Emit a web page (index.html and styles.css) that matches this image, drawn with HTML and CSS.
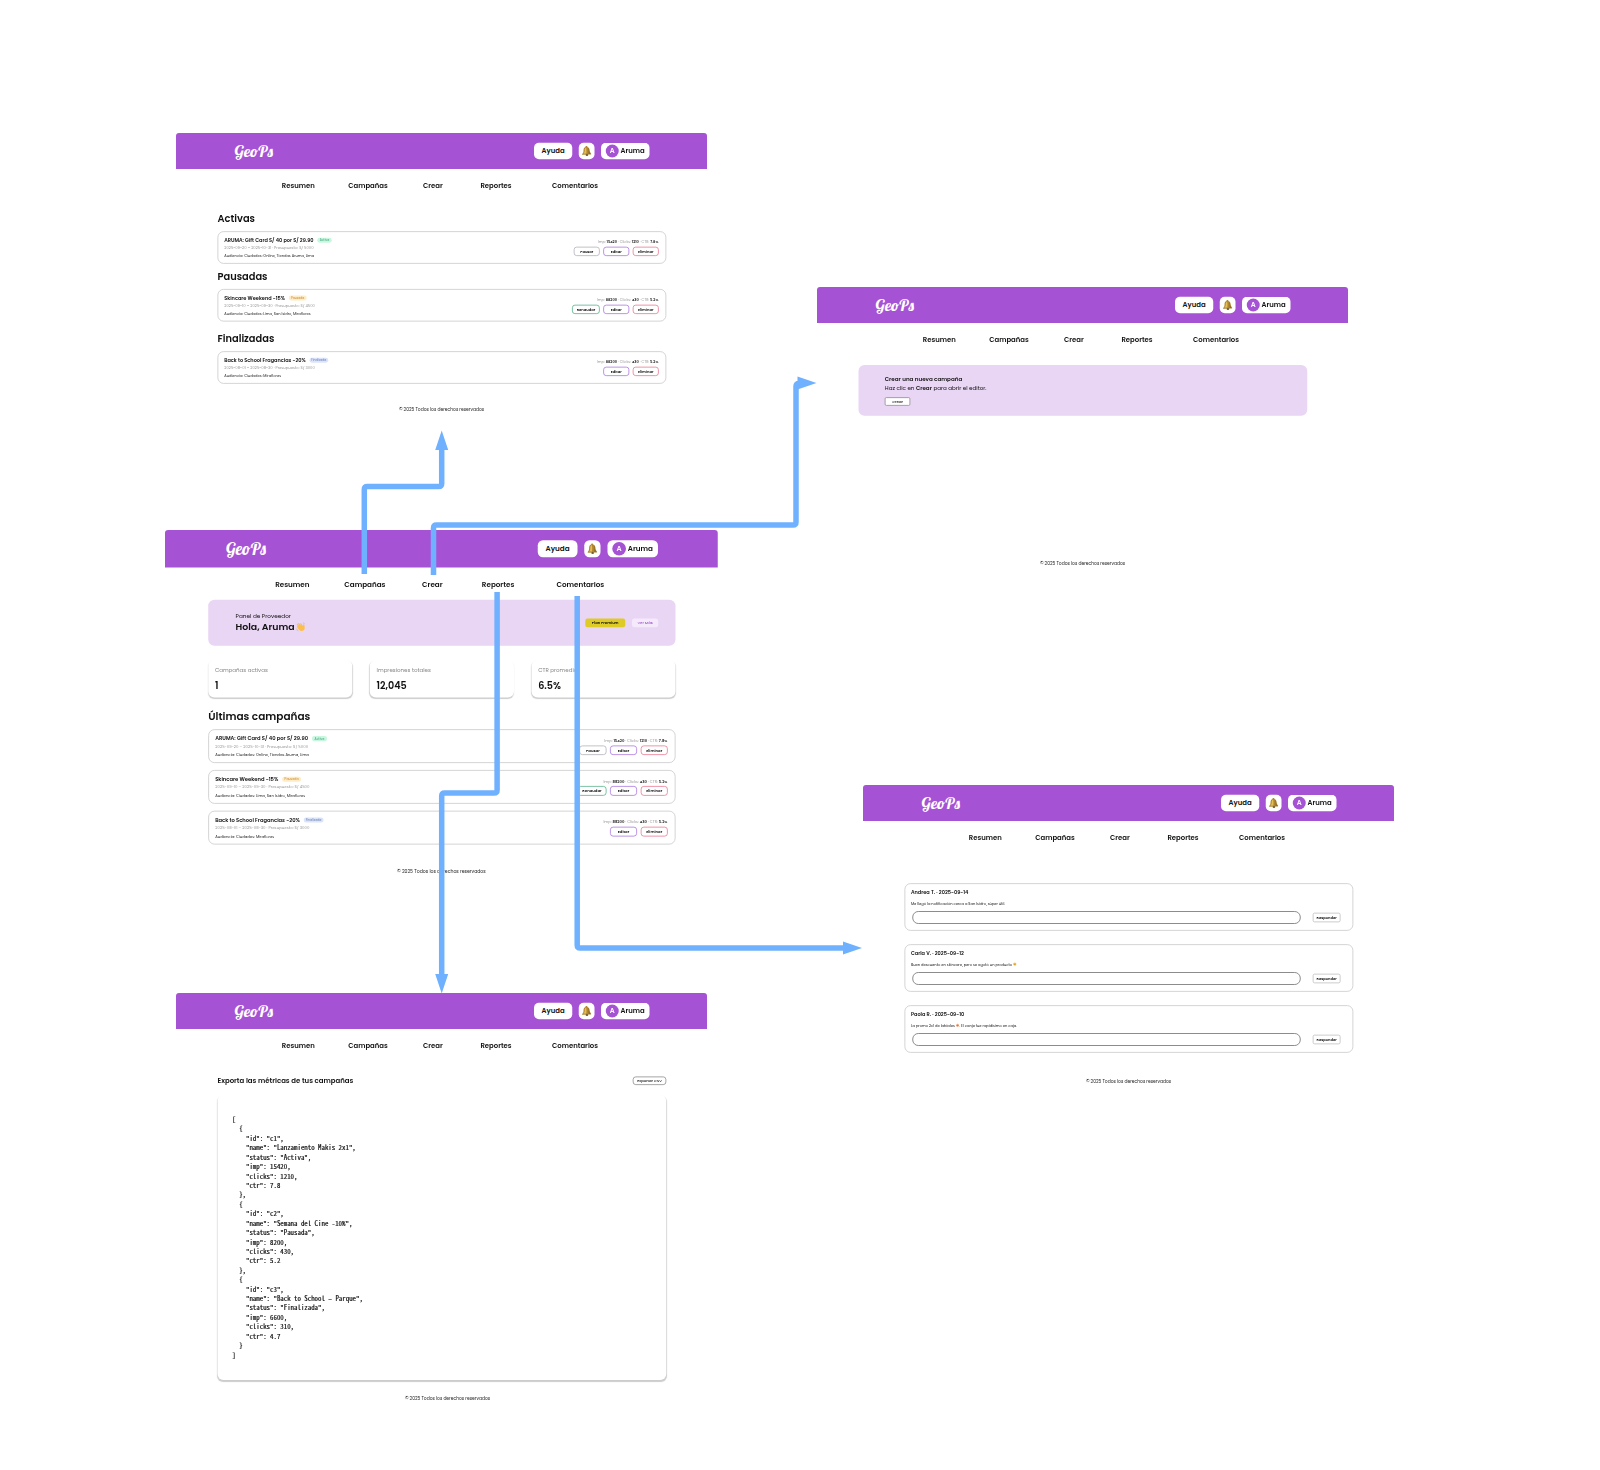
FILE: index.html
```html
<!DOCTYPE html>
<html lang="es">
<head>
<meta charset="utf-8">
<title>GeoPs – flujo de navegación</title>
<link rel="stylesheet" href="styles.css">
</head>
<body>
<svg class="defs" width="0" height="0" aria-hidden="true">
  <symbol id="bell" viewBox="2 1 16 18.500">
    <path d="M9.600 1.200c1.300 0 1.800.8 1.700 1.900 2.700.9 3.800 3 4 6 .2 2.600.8 4.200 2.700 5.700.7.600.5 1.600-.5 1.700L3 17c-1.200 0-1.500-1.100-.7-1.800C4 13.800 4.500 12 4.500 9.400c0-3.300 1-5.500 3.500-6.300 0-1.100.500-1.900 1.600-1.900z" fill="#b08630"/>
    <path d="M9 4c-2 1-2.600 3-2.500 5.500.1 2.500-.7 4.200-2.200 5.500l5.200-.2C9.800 11 10 7 9 4z" fill="#e3bd55"/>
    <path d="M13 5c1.300 1.500 1.200 4 1.500 6 .3 1.700 1 3 2 4l-3 .2c.4-3.500.3-7-.5-10.200z" fill="#7d6326"/>
    <ellipse cx="10.500" cy="17.400" rx="2.300" ry="1.700" fill="#6f5a2a"/>
  </symbol>
  <symbol id="wave" viewBox="0 0 20 20">
    <path d="M3 5.500C2 4 3.800 2.900 4.900 4.300L8 8 5.500 4C4.700 2.500 6.500 1.300 7.600 2.900L11 7.500 9.400 4.200c-.7-1.600 1.300-2.500 2.200-1L14.500 8l.6-2.500c.5-1.700 2.600-1.200 2.500.6-.1 2 .7 4 .6 6.500-.2 4-5 6.400-8.400 4.600C7 15.700 4.600 12.500 3 10c-.8-1.500.7-2.500 1.800-1.300z" fill="#fbbf4b"/>
    <path d="M2 13c.3 2.300 1.500 3.800 3.500 4.500M15 1.500c1.500.3 2.500 1.200 3 2.500" fill="none" stroke="#e0a95a" stroke-width="1"/>
  </symbol>
</svg>

<main class="canvas">

  <section class="board campaigns">
    <header class="top"><span class="logo">GeoPs</span><span class="pill help">Ayuda</span><span class="pill bell"><svg><use href="#bell"/></svg></span><span class="pill user"><i class="avatar">A</i>Aruma</span></header>
    <nav><a class="n1">Resumen</a><a class="n2">Campañas</a><a class="n3">Crear</a><a class="n4">Reportes</a><a class="n5">Comentarios</a></nav>
    <div class="content">
      <h2>Activas</h2>
      <article class="camp">
        <div class="info"><h3>ARUMA: Gift Card S/ 40 por S/ 29.90<span class="badge on">Activa</span></h3><p class="date">2025-09-20 – 2025-10-31 · Presupuesto: S/ 5000</p><p class="aud">Audiencia: Ciudades: Online, Tiendas Aruma, Lima</p></div>
        <div class="side"><p>Imp: <b>15420</b> · Clicks: <b>1210</b> · CTR: <b>7.8%</b></p><div class="btns"><span class="btn">Pausar</span><span class="btn edit">Editar</span><span class="btn del">Eliminar</span></div></div>
      </article>
      <h2 class="h-paused">Pausadas</h2>
      <article class="camp">
        <div class="info"><h3>Skincare Weekend -15%<span class="badge wait">Pausada</span></h3><p class="date">2025-09-10 – 2025-09-30 · Presupuesto: S/ 4500</p><p class="aud">Audiencia: Ciudades: Lima, San Isidro, Miraflores</p></div>
        <div class="side"><p>Imp: <b>88200</b> · Clicks: <b>430</b> · CTR: <b>5.2%</b></p><div class="btns"><span class="btn resume">Renaudar</span><span class="btn edit">Editar</span><span class="btn del">Eliminar</span></div></div>
      </article>
      <h2 class="h-done">Finalizadas</h2>
      <article class="camp">
        <div class="info"><h3>Back to School Fragancias -20%<span class="badge end">Finalizada</span></h3><p class="date">2025-08-01 – 2025-08-30 · Presupuesto: S/ 3000</p><p class="aud">Audiencia: Ciudades: Miraflores</p></div>
        <div class="side"><p>Imp: <b>88200</b> · Clicks: <b>430</b> · CTR: <b>5.2%</b></p><div class="btns"><span class="btn edit">Editar</span><span class="btn del">Eliminar</span></div></div>
      </article>
    </div>
    <footer>© 2025 Todos los derechos reservados</footer>
  </section>

  <section class="board create">
    <header class="top"><span class="logo">GeoPs</span><span class="pill help">Ayuda</span><span class="pill bell"><svg><use href="#bell"/></svg></span><span class="pill user"><i class="avatar">A</i>Aruma</span></header>
    <nav><a class="n1">Resumen</a><a class="n2">Campañas</a><a class="n3">Crear</a><a class="n4">Reportes</a><a class="n5">Comentarios</a></nav>
    <div class="content">
      <div class="panel new"><h4>Crear una nueva campaña</h4><p>Haz clic en <b>Crear</b> para abrir el editor.</p><span class="mini">Crear</span></div>
    </div>
    <footer>© 2025 Todos los derechos reservados</footer>
  </section>

  <section class="board summary">
    <header class="top"><span class="logo">GeoPs</span><span class="pill help">Ayuda</span><span class="pill bell"><svg><use href="#bell"/></svg></span><span class="pill user"><i class="avatar">A</i>Aruma</span></header>
    <nav><a class="n1">Resumen</a><a class="n2">Campañas</a><a class="n3">Crear</a><a class="n4">Reportes</a><a class="n5">Comentarios</a></nav>
    <div class="content">
      <div class="panel hello">
        <div class="greet"><p>Panel de Proveedor</p><strong>Hola, Aruma<svg><use href="#wave"/></svg></strong></div>
        <span class="plan">Plan Premium</span><span class="more">Ver Más</span>
      </div>
      <div class="stats">
        <div class="stat"><p>Campañas activas</p><strong>1</strong></div>
        <div class="stat"><p>Impresiones totales</p><strong>12,045</strong></div>
        <div class="stat"><p>CTR promedio</p><strong>6.5%</strong></div>
      </div>
      <h2>Últimas campañas</h2>
      <div class="list">
      <article class="camp">
        <div class="info"><h3>ARUMA: Gift Card S/ 40 por S/ 29.90<span class="badge on">Activa</span></h3><p class="date">2025-09-20 – 2025-10-31 · Presupuesto: S/ 5000</p><p class="aud">Audiencia: Ciudades: Online, Tiendas Aruma, Lima</p></div>
        <div class="side"><p>Imp: <b>15420</b> · Clicks: <b>1210</b> · CTR: <b>7.8%</b></p><div class="btns"><span class="btn">Pausar</span><span class="btn edit">Editar</span><span class="btn del">Eliminar</span></div></div>
      </article>
      <article class="camp">
        <div class="info"><h3>Skincare Weekend -15%<span class="badge wait">Pausada</span></h3><p class="date">2025-09-10 – 2025-09-30 · Presupuesto: S/ 4500</p><p class="aud">Audiencia: Ciudades: Lima, San Isidro, Miraflores</p></div>
        <div class="side"><p>Imp: <b>88200</b> · Clicks: <b>430</b> · CTR: <b>5.2%</b></p><div class="btns"><span class="btn resume">Renaudar</span><span class="btn edit">Editar</span><span class="btn del">Eliminar</span></div></div>
      </article>
      <article class="camp">
        <div class="info"><h3>Back to School Fragancias -20%<span class="badge end">Finalizada</span></h3><p class="date">2025-08-01 – 2025-08-30 · Presupuesto: S/ 3000</p><p class="aud">Audiencia: Ciudades: Miraflores</p></div>
        <div class="side"><p>Imp: <b>88200</b> · Clicks: <b>430</b> · CTR: <b>5.2%</b></p><div class="btns"><span class="btn edit">Editar</span><span class="btn del">Eliminar</span></div></div>
      </article>
      </div>
    </div>
    <footer>© 2025 Todos los derechos reservados</footer>
  </section>

  <section class="board comments">
    <header class="top"><span class="logo">GeoPs</span><span class="pill help">Ayuda</span><span class="pill bell"><svg><use href="#bell"/></svg></span><span class="pill user"><i class="avatar">A</i>Aruma</span></header>
    <nav><a class="n1">Resumen</a><a class="n2">Campañas</a><a class="n3">Crear</a><a class="n4">Reportes</a><a class="n5">Comentarios</a></nav>
    <div class="content">
      <article class="comment"><h4>Andrea T. · 2025-09-14</h4><p>Me llegó la notificación cerca a San Isidro, súper útil.</p><div class="reply"><span class="field"></span><span class="answer">Responder</span></div></article>
      <article class="comment"><h4>Carla V. · 2025-09-12</h4><p>Buen descuento en skincare, pero se agotó un producto <svg viewBox="0 0 10 10"><circle cx="5" cy="5" r="4.500" fill="#fbb93c"/><path d="M3.200 7.300q1.800-1.600 3.600 0" stroke="#8a5a12" fill="none"/></svg></p><div class="reply"><span class="field"></span><span class="answer">Responder</span></div></article>
      <article class="comment"><h4>Paola R. · 2025-09-10</h4><p>La promo 2x1 de labiales <svg viewBox="0 0 10 10"><path d="M5 0c.4 2 3.600 3.300 3.600 6.300C8.600 8.600 7 10 5 10S1.400 8.600 1.400 6.300C1.400 4.700 2.300 4 2.700 3c.8.500 1 1 1.100 1.500C4.700 3.500 5.300 2 5 0z" fill="#f4702b"/></svg>. El canje fue rapidísimo en caja.</p><div class="reply"><span class="field"></span><span class="answer">Responder</span></div></article>
    </div>
    <footer>© 2025 Todos los derechos reservados</footer>
  </section>

  <section class="board reports">
    <header class="top"><span class="logo">GeoPs</span><span class="pill help">Ayuda</span><span class="pill bell"><svg><use href="#bell"/></svg></span><span class="pill user"><i class="avatar">A</i>Aruma</span></header>
    <nav><a class="n1">Resumen</a><a class="n2">Campañas</a><a class="n3">Crear</a><a class="n4">Reportes</a><a class="n5">Comentarios</a></nav>
    <div class="content">
      <div class="export"><h4>Exporta las métricas de tus campañas</h4><span class="csv">Exportar CSV</span></div>
      <div class="code"><pre>[
  {
    "id": "c1",
    "name": "Lanzamiento Makis 2x1",
    "status": "Activa",
    "imp": 15420,
    "clicks": 1210,
    "ctr": 7.8
  },
  {
    "id": "c2",
    "name": "Semana del Cine -10%",
    "status": "Pausada",
    "imp": 8200,
    "clicks": 430,
    "ctr": 5.2
  },
  {
    "id": "c3",
    "name": "Back to School – Parque",
    "status": "Finalizada",
    "imp": 6600,
    "clicks": 310,
    "ctr": 4.7
  }
]</pre></div>
    </div>
    <footer>© 2025 Todos los derechos reservados</footer>
  </section>

  <svg class="links" viewBox="0 0 1600 1470">
    <g fill="none" stroke="#6fb1ff" stroke-width="5.500" stroke-linejoin="round">
      <path d="M364.300 574V489.500q0-3 3-3H438.700q3 0 3-3V449"/>
      <path d="M433.500 575V528q0-3 3-3H793q3 0 3-3V386.500q0-3 3-3h1"/>
      <path d="M497.100 592V790q0 3-3 3H444.700q-3 0-3 3V976"/>
      <path d="M577.200 596V945q0 3 3 3H844"/>
    </g>
    <g fill="#6fb1ff">
      <path d="M441.700 430.500l6.500 19.500h-13z"/>
      <path d="M816.500 383l-19 6.500v-13z"/>
      <path d="M441.700 993.500l6.500-19.500h-13z"/>
      <path d="M862 948l-19 6.500v-13z"/>
    </g>
  </svg>
</main>
</body>
</html>
```
FILE: styles.css
```css
* { box-sizing: border-box; margin: 0; padding: 0; }
body { background: #fff; }
.defs { position: absolute; }
.canvas { position: relative; width: 1600px; height: 1470px; overflow: hidden; font-family: Poppins, Inter, "Open Sans", sans-serif; color: #111; }
.links { position: absolute; left: 0; top: 0; width: 1600px; height: 1470px; }

/* Boards are laid out at four times their size and scaled down on the canvas */
.board { position: absolute; width: 53.1em; font-size: 40px; display: flex; flex-direction: column; transform: scale(.25); transform-origin: 0 0; }
.campaigns { left: 176px; top: 132.700px; height: 29em; }
.create { left: 817.400px; top: 287px; height: 29em; }
.summary { left: 165.400px; top: 530px; height: 33.600em; font-size: 41.640px; }
.comments { left: 862.700px; top: 785px; height: 31em; }
.reports { left: 176px; top: 993.200px; height: 42em; }

.top { flex: none; height: 3.610em; display: flex; align-items: center; padding: 0 5.750em 0 5.850em; background: #a652d4; border-radius: .3em .3em 0 0; }
.logo { font: 1.640em/1 Lobster, "Liberation Serif", serif; color: #fff; margin-right: auto; }
.pill { height: 1.640em; background: #fff; border-radius: .5em; display: flex; align-items: center; justify-content: center; }
.pill.help, .pill.user { font-size: .690em; line-height: 1; font-weight: 600; height: 2.380em; border-radius: .72em; }
.help { width: 5.540em; margin-right: .960em; }
.pill.bell { width: 1.560em; margin-right: .66em; }
.bell svg { width: .98em; height: 1.050em; }
.user { width: 7.030em; }
.avatar { flex: none; width: 1.900em; height: 1.900em; border-radius: 50%; background: #a652d4; color: #fff; font-style: normal; display: flex; align-items: center; justify-content: center; margin-right: .25em; }

nav { flex: none; height: 3.300em; display: flex; align-items: center; padding-left: 10.580em; font-weight: 600; }
nav a { font-size: .69em; line-height: 1; white-space: nowrap; }
.n1 { width: 9.630em; } .n2 { width: 10.820em; } .n3 { width: 8.330em; } .n4 { width: 10.380em; }

.content { flex: none; width: 44.880em; margin-left: 4.150em; display: flex; flex-direction: column; }
h2 { font-size: .985em; font-weight: 600; line-height: 1.421; }
.campaigns .content { padding-top: .930em; }
.campaigns .camp { margin-top: .590em; }
.h-paused { margin-top: .550em; }
.h-done { margin-top: 1em; }

.camp { height: 3.250em; border: 3.500px solid #c6c6c6; border-radius: .6em; padding: .46em .68em 0 .6em; display: flex; justify-content: space-between; background: #fff; }
.info { display: flex; flex-direction: column; white-space: nowrap; }
.camp h3 { font-size: .5em; font-weight: 600; height: 1.440em; line-height: 1; display: flex; align-items: center; gap: .75em; }
.badge { font-size: .600em; font-weight: 400; width: 4.800em; height: 1.650em; border-radius: .8em; display: flex; align-items: center; justify-content: center; }
.badge.on { background: #c8f7e0; color: #3f9e78; }
.badge.wait { background: #ffebc4; color: #c98a33; width: 6em; }
.badge.end { background: #dbe4fa; color: #6b7fb0; width: 6.300em; }
.date { font-size: .375em; line-height: 2.080; color: #999; }
.aud { font-size: .362em; line-height: 2.430; color: #222; }
.side { display: flex; flex-direction: column; align-items: flex-end; padding-top: .300em; }
.side p { font-size: .360em; line-height: 1.300; color: #999; white-space: nowrap; margin-right: .1em; }
.side b { color: #111; font-weight: 600; }
.btns { display: flex; gap: .340em; margin-top: .250em; }
.btn { font-weight: 600; width: 7.050em; height: 2.500em; font-size: .370em; line-height: 1; border: 3px solid #adadb8; border-radius: .8em; display: flex; align-items: center; justify-content: center; }
.btns .edit { border-color: #a672dc; }
.btns .del { border-color: #e8718c; }
.btns .resume { border-color: #4fae84; width: 7.500em; }
footer { margin: auto 0 0; font-size: .443em; line-height: 1; text-align: center; white-space: nowrap; color: #222; }
.campaigns footer, .create footer, .comments footer { margin-bottom: 2.650em; }
.summary footer { margin-bottom: 1.350em; }
.reports footer { margin-bottom: 2.850em; padding-left: 2.700em; }

.panel { background: #e9d5f4; border-radius: .6em; }
.new { height: 5.060em; margin-top: .900em; padding: .960em 2.630em; }
.new h4 { font-size: .560em; line-height: 1.350; font-weight: 600; white-space: nowrap; }
.new p { font-size: .557em; line-height: 1.350; margin-top: .370em; white-space: nowrap; }
.new b { font-weight: 600; }
.mini, .csv { display: flex; align-items: center; justify-content: center; background: #fff; border: 3px solid #888; font-size: .380em; line-height: 1; font-weight: 500; }
.mini { width: 6.700em; height: 2.250em; border-radius: .4em; margin-top: 1.400em; }

.hello { height: 4.420em; display: flex; align-items: center; padding: 0 1.670em 0 2.630em; margin-top: -.2em; }
.greet { margin-right: auto; }
.greet p { font-size: .550em; line-height: 1.500; }
.greet strong { display: flex; align-items: center; gap: .1em; font-size: .900em; line-height: 1.400; font-weight: 600; white-space: nowrap; }
.greet svg { width: 1.080em; height: 1.080em; }
.plan, .more { font-size: .360em; line-height: 1; display: flex; align-items: center; justify-content: center; height: 2.330em; border-radius: .6em; white-space: nowrap; }
.plan { width: 10.700em; background: #dfcb25; font-weight: 600; margin-right: 1.800em; }
.more { width: 7em; background: #f5e9fc; color: #a652d4; font-weight: 500; }
.stats { display: grid; grid-template-columns: repeat(3, 1fr); gap: 1.680em; margin-top: 1.350em; }
.stat { height: 3.620em; padding: .620em .650em; border-radius: .6em; box-shadow: 0 6px 4px #0003; }
.stat p { font-size: .530em; line-height: 1.500; color: #888; white-space: nowrap; }
.stat strong { display: block; font-size: .920em; line-height: 1.200; font-weight: 600; margin-top: .500em; }
.summary h2 { margin-top: 1.110em; font-size: 1.010em; line-height: 1.390; }
.summary .content { width: 44.900em; }
.list { display: flex; flex-direction: column; gap: .660em; margin-top: .520em; }

.comments .content { padding-top: 2.920em; gap: 1.350em; }
.comment { height: 4.750em; border: 3.500px solid #c6c6c6; border-radius: .6em; padding: .450em 1.200em 0 .570em; }
.comment h4 { font-size: .500em; line-height: 1.500; font-weight: 600; }
.comment p { font-size: .362em; line-height: 1.500; margin-top: 1.300em; white-space: nowrap; }
.comment svg { width: 1em; height: 1em; vertical-align: -.1em; }
.reply { display: flex; align-items: center; justify-content: space-between; margin: .480em 0 0 .140em; }
.field { width: 38.850em; height: 1.300em; border: 4px solid #8c8c8c; border-radius: .6em; }
.answer { font-size: .370em; font-weight: 600; width: 7.500em; height: 2.580em; border: 3px solid #bbb; border-radius: .5em; display: flex; align-items: center; justify-content: center; }

.export { display: flex; align-items: center; justify-content: space-between; margin-top: 1.370em; height: 1em; }
.export h4 { font-size: .694em; line-height: 1; font-weight: 600; white-space: nowrap; }
.csv { width: 8.800em; height: 2.250em; border-radius: .8em; white-space: nowrap; }
.code { height: 28.500em; margin-top: .930em; border-radius: .6em; box-shadow: 0 6px 4px #0003; padding: 1.930em 1.480em; }
pre { font: .686em/1.374 "Noto Sans Mono CJK JP", "Liberation Mono", monospace; color: #111; -webkit-text-stroke: .8px #111; }
```
